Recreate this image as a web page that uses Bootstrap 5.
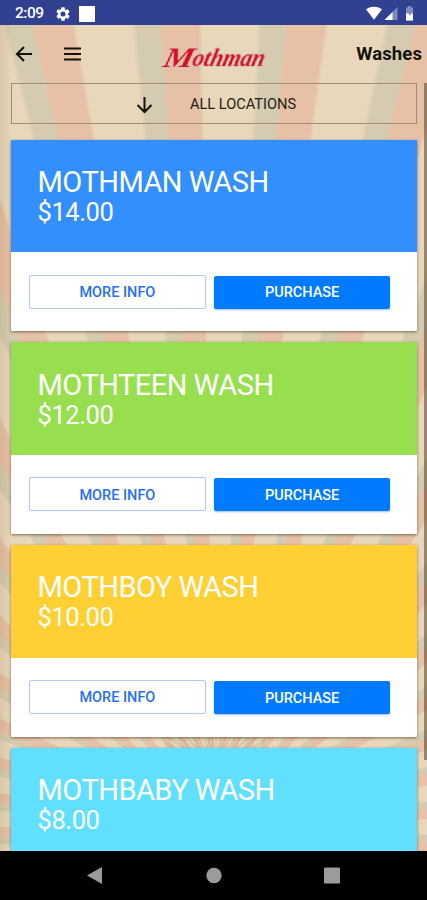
<!DOCTYPE html>
<html lang="en">
<head>
<meta charset="utf-8">
<meta name="viewport" content="width=device-width, initial-scale=1">
<title>Washes</title>
<link rel="stylesheet" href="https://cdn.jsdelivr.net/npm/bootstrap@5.3.0/dist/css/bootstrap.min.css">
<style>
  body { font-family: Roboto, sans-serif; height: 900px; overflow: hidden; }
  svg { display: block; }
  .status { height: 25px; background: #31408f; font-size: 15.5px; padding: 2px 12px 0 15px; letter-spacing: -.5px; }
  .gear { margin-left: 12px; }
  .status-square { width: 16px; height: 16px; margin-left: 9px; }
  .rays {
    min-height: 0; overflow: hidden;
    background:
      linear-gradient(90deg, rgba(120,80,40,.12), transparent 12px) no-repeat,
      repeating-conic-gradient(from -90deg at 50px 34px, rgba(165,145,115,.22) 0 3deg, transparent 4deg 6deg, rgba(165,145,115,.22) 7deg) 165px 712px / 100px 12px no-repeat,
      repeating-conic-gradient(from -3.8deg at 215px 798px, #e6c1a6 0 2.6deg, #e8d7ba 2.9deg 6.8deg, #d5cbb0 7.2deg 8.8deg, #e6c1a6 9deg);
  }
  .topbar { height: 58px; padding: 0 5px 0 14px; }
  .menu-icon { margin-left: 30px; }
  .brand-box { margin-left: 80px; overflow: visible; }
  .page-title { font-size: 18.5px; font-weight: 700; color: #17120c; letter-spacing: .1px; line-height: 1; padding-top: 1px; }
  .brand-logo { font-family: "Liberation Serif", serif; font-weight: 700; font-style: italic; fill: #d5101f; stroke: #f7ebe6; stroke-width: 1.2px; paint-order: stroke; filter: drop-shadow(0 0 .6px #6a6680); }
  .btn.locations { height: 41px; border: 1px solid #a08d75; border-radius: 0; font-size: 14.6px; color: #251d15; gap: 37px; padding: 2px 0 0 4px; letter-spacing: 0; }
  .content { padding: 0 10px 0 11px; }
  .wash { height: 191.7px; margin-bottom: 11px; border: 0; border-radius: 1px; box-shadow: 0 1px 3px rgba(70,50,30,.65); flex-shrink: 0; }
  .wash-list { padding-top: 15.5px; }
  .wash-head { height: 112.7px; padding: 25.500px 26.500px 0; color: #fff; flex-shrink: 0; }
  .wash-name { font-size: 29px; line-height: 34px; font-weight: 400; margin: 0; letter-spacing: -.5px; white-space: nowrap; }
  .wash-price { font-size: 25.5px; line-height: 27px; margin: 0; letter-spacing: -.4px; }
  .blue { background: #338ffe; } .green { background: #98df4f; }
  .yellow { background: #fed033; } .cyan { background: #60dfff; }
  .wash-actions { padding: 22.5px 27px 0 17.5px; gap: 8px; }
  .wash-actions .btn { height: 34px; padding: 2px 0 0; font-size: 14.5px; font-weight: 500; border-radius: 2px; flex: 1 1 0; letter-spacing: 0; }
  .wash-actions .btn.info { border: 1px solid #b3c4fb; color: #2870ee; }
  .wash-actions .btn.buy { height: 33px; margin-top: 1px; background: #007aff; color: #fff; border: 0; box-shadow: 0 1px 2px rgba(0,60,160,.35); }
  .scroll-thumb { right: 0; top: 83px; width: 3px; height: 677px; background: rgba(100,80,60,.62); }
  .sysnav { height: 49px; background: #000; flex-shrink: 0; }
</style>
<script src="https://cdn.jsdelivr.net/npm/bootstrap@5.3.0/dist/js/bootstrap.bundle.min.js"></script>
</head>
<body class="d-flex flex-column position-relative">
  <div class="status d-flex align-items-center text-white flex-shrink-0 fw-medium">
    <span>2:09</span>
    <svg class="gear" width="14" height="14" viewBox="2 2 20 20" fill="#fff"><path fill-rule="evenodd" d="M19.14 12.94a7 7 0 0 0 0-1.88l2.03-1.58a.5.5 0 0 0 .12-.61l-1.92-3.32a.5.5 0 0 0-.59-.22l-2.39.96a7 7 0 0 0-1.62-.94l-.36-2.54a.5.5 0 0 0-.48-.41h-3.84a.5.5 0 0 0-.47.41l-.36 2.54a7 7 0 0 0-1.62.94l-2.39-.96a.5.5 0 0 0-.59.22L2.74 8.87a.5.5 0 0 0 .12.61l2.03 1.58a7 7 0 0 0 0 1.88l-2.03 1.58a.5.5 0 0 0-.12.61l1.92 3.32c.12.22.37.29.59.22l2.39-.96c.5.38 1.03.7 1.62.94l.36 2.54c.05.24.24.41.48.41h3.84c.24 0 .44-.17.47-.41l.36-2.54a7 7 0 0 0 1.62-.94l2.39.96c.22.08.47 0 .59-.22l1.92-3.32a.5.5 0 0 0-.12-.61zM12 15.6a3.6 3.6 0 1 1 0-7.2 3.6 3.6 0 0 1 0 7.2z"/></svg>
    <span class="status-square bg-white"></span>
    <svg class="ms-auto" width="50" height="16" viewBox="0 0 50 16" fill="#fff">
      <path d="M1 3.200Q9 -1.500 17 3.200L9 13.800z"/>
      <path d="M32.500 1V14H19.500z" opacity=".38"/><path d="M27.500 6V14H19.500z"/>
      <path d="M41 1.500h2V0h3v1.500h2v13h-7z" opacity=".4"/><path d="M41 7.500h2.500l1.500 2L46.500 7.500H48v7h-7z"/>
    </svg>
  </div>

  <main class="rays flex-grow-1 d-flex flex-column">
    <header class="topbar d-flex align-items-center flex-shrink-0">
      <svg width="20" height="18" viewBox="0 0 20 18" fill="none" stroke="#15110c" stroke-width="2.100"><path d="M18 9H3M10 2L3 9l7 7"/></svg>
      <svg class="menu-icon" width="17" height="14" viewBox="0 0 17 14" fill="none" stroke="#15110c" stroke-width="2.200"><path d="M0 1.500h17M0 7h17M0 12.500h17"/></svg>
      <svg class="brand-box" width="112" height="36" viewBox="0 0 112 36">
        <g class="brand-logo" transform="translate(0 31) skewX(-14)">
          <text font-size="29" x="1" y="0" textLength="30" lengthAdjust="spacingAndGlyphs">M</text>
          <text font-size="25" x="30" y="-1" textLength="72" lengthAdjust="spacingAndGlyphs">othman</text>
        </g>
      </svg>
      <h1 class="page-title mb-0 ms-auto">Washes</h1>
    </header>

    <div class="content d-flex flex-column">
      <button class="btn locations w-100 d-flex align-items-center justify-content-center flex-shrink-0" type="button">
        <svg width="17" height="18" viewBox="0 0 17 18" fill="none" stroke="#15110c" stroke-width="2"><path d="M8.500 1v15M1.500 9l7 7 7-7"/></svg>
        <span>ALL LOCATIONS</span>
      </button>

      <div class="wash-list d-flex flex-column">
        <section class="card wash">
          <div class="wash-head blue"><h2 class="wash-name">MOTHMAN WASH</h2><p class="wash-price">$14.00</p></div>
          <div class="wash-actions d-flex"><button class="btn info" type="button">MORE INFO</button><button class="btn buy" type="button">PURCHASE</button></div>
        </section>
        <section class="card wash">
          <div class="wash-head green"><h2 class="wash-name">MOTHTEEN WASH</h2><p class="wash-price">$12.00</p></div>
          <div class="wash-actions d-flex"><button class="btn info" type="button">MORE INFO</button><button class="btn buy" type="button">PURCHASE</button></div>
        </section>
        <section class="card wash">
          <div class="wash-head yellow"><h2 class="wash-name">MOTHBOY WASH</h2><p class="wash-price">$10.00</p></div>
          <div class="wash-actions d-flex"><button class="btn info" type="button">MORE INFO</button><button class="btn buy" type="button">PURCHASE</button></div>
        </section>
        <section class="card wash">
          <div class="wash-head cyan"><h2 class="wash-name">MOTHBABY WASH</h2><p class="wash-price">$8.00</p></div>
        </section>
      </div>
    </div>
  </main>

  <div class="scroll-thumb position-absolute"></div>

  <nav class="sysnav">
    <svg width="427" height="49" viewBox="0 0 427 49" fill="#9b9b9b"><path d="M87 24.500L102 16v17z"/><circle cx="214" cy="24.500" r="7.700"/><rect x="324" y="16.500" width="16" height="16" rx="1"/></svg>
  </nav>
</body>
</html>
